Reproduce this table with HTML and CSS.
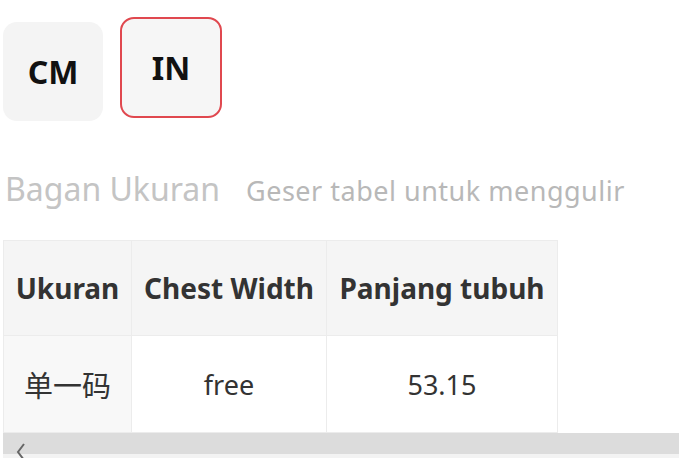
FILE: index.html
```html
<!DOCTYPE html>
<html lang="id">
<head>
	<meta charset="UTF-8" />
	<title>Bagan Ukuran</title>
	<link rel="stylesheet" href="styles.css">
</head>
<body>
	<!-- 单位切换 -->
	<div class="units">
		<div class="unit unit-cm">CM</div>
		<div class="unit unit-in active">IN</div>
	</div>

	<!-- 标题 -->
	<div class="chart-head">
		<span class="chart-title">Bagan Ukuran</span>
		<span class="chart-tip">Geser tabel untuk menggulir</span>
	</div>

	<!-- 尺码表 -->
	<div class="chart-wrap">
		<table class="size-table">
			<tr>
				<th class="c1">Ukuran</th>
				<th class="c2">Chest Width</th>
				<th class="c3">Panjang tubuh</th>
			</tr>
			<tr>
				<td class="c1 first">单一码</td>
				<td class="c2">free</td>
				<td class="c3">53.15</td>
			</tr>
		</table>
		<div class="scrollbar">
			<svg class="arrow" width="14" height="20" viewBox="0 0 14 20"><polyline points="10,3 4,11 10,19" fill="none" stroke="#666" stroke-width="2"/></svg>
		</div>
	</div>
</body>
</html>
```

FILE: styles.css
```css
*{
	margin:0;
	padding:0;
	box-sizing:border-box;
}
body{
	background:#fff;
	font-family:"Noto Sans","Noto Sans CJK SC",sans-serif;
	color:#333;
	overflow:hidden;
}
.units{
	display:flex;
	align-items:flex-start;
	gap:17px;
	padding:17px 0 0 3px;
}
.unit{
	width:100px;
	height:99px;
	border-radius:14px;
	background:#f4f4f4;
	display:flex;
	align-items:center;
	justify-content:center;
	font-size:32px;
	font-weight:700;
	color:#111;
}
.unit-cm{
	margin-top:5px;
}
.unit.active{
	width:102px;
	height:101px;
	background:#f6f6f6;
	border:2px solid #e0484f;
}
.chart-head{
	display:flex;
	align-items:baseline;
	padding:48px 0 0 5px;
	height:119px;
}
.chart-title{
	font-size:32px;
	color:#c4c4c4;
	margin-right:26px;
	line-height:40px;
}
.chart-tip{
	font-size:27px;
	color:#b8b8b8;
	letter-spacing:0.5px;
}
.chart-wrap{
	margin-left:3px;
}
.size-table{
	border-collapse:collapse;
	border:1px solid #eee;
}
.size-table th,
.size-table td{
	border:1px solid #ececec;
	text-align:center;
	white-space:nowrap;
}
.size-table th{
	height:95px;
	background:#f5f5f5;
	font-size:28px;
	font-weight:700;
	color:#333;
}
.size-table td{
	height:97px;
	background:#fff;
	font-size:27px;
	color:#333;
}
.size-table td.first{
	background:#f8f8f8;
	font-size:29px;
}
.c1{ width:128px; }
.c2{ width:195px; }
.c3{ width:231px; }
.scrollbar{
	width:676px;
	height:21px;
	background:#dcdcdc;
	border-bottom:5px solid #f3f3f3;
	box-sizing:content-box;
	position:relative;
}
.scrollbar .arrow{
	position:absolute;
	left:11px;
	top:8px;
}
```
